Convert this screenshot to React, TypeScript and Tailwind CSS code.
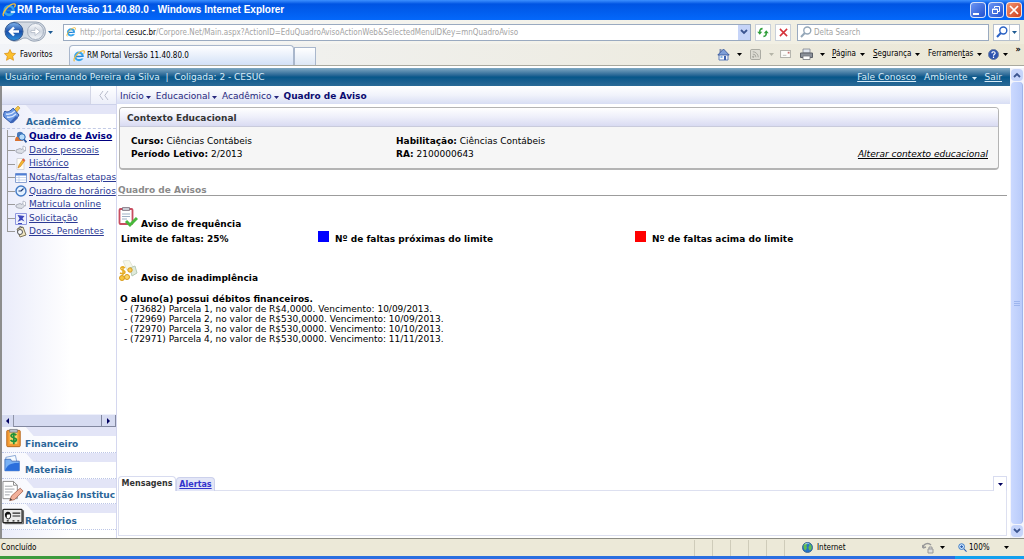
import type { ReactNode } from "react";

const verdana = "font-['DejaVu_Sans',Verdana,sans-serif]";
const tahoma = "font-['DejaVu_Sans_Condensed',Tahoma,'Noto_Sans',sans-serif]";

function Caret({ className = "" }: { className?: string }) {
  return (
    <svg viewBox="0 0 5 3" className={`w-[5px] h-[3px] shrink-0 ${className}`} fill="currentColor">
      <path d="M0 0h5L2.5 3z" />
    </svg>
  );
}

function Chevron({ up = false }: { up?: boolean }) {
  return (
    <svg viewBox="0 0 8 6" className="w-2 h-1.5" fill="none" stroke="#3c5590" strokeWidth="1.8">
      <path d={up ? "M1 5l3-3 3 3" : "M1 1l3 3 3-3"} />
    </svg>
  );
}

function IeLogo({ className = "w-3 h-3" }: { className?: string }) {
  return (
    <svg viewBox="0 0 16 16" className={`shrink-0 ${className}`} fill="none">
      <circle cx="8" cy="8.5" r="5" stroke="#36a4ec" strokeWidth="3" />
      <path d="M4 8.6h9" stroke="#2282d6" strokeWidth="2" />
      <path d="M10 10.3h5" stroke="#eaf4ff" strokeWidth="2" />
      <path d="M2 15C-1 12 8 1 14 1c2 0 1 3 0 4" stroke="#f3be3c" strokeWidth="1.5" />
    </svg>
  );
}

/* ── Browser icons ── */

function BackForward() {
  return (
    <svg viewBox="0 0 42 22" className="w-[42px] h-[22px]" fill="none">
      <defs>
        <linearGradient id="back" x2="0" y2="1">
          <stop stopColor="#7fb4ee" />
          <stop offset=".5" stopColor="#1b4fa8" />
          <stop offset="1" stopColor="#2e93e0" />
        </linearGradient>
        <linearGradient id="fwd" x2="0" y2="1">
          <stop stopColor="#fafbfd" />
          <stop offset=".5" stopColor="#cfd6e0" />
          <stop offset="1" stopColor="#f6f8fb" />
        </linearGradient>
      </defs>
      <path d="M10 1h22a9.500 9.500 0 010 19c-6 1-7-3-11-3s-6 4-12 3A10 10 0 0110 1z" fill="#d3dae3" stroke="#97a3b4" />
      <circle cx="10" cy="10.500" r="9" fill="url(#back)" stroke="#345a91" />
      <circle cx="31.500" cy="10.500" r="8" fill="url(#fwd)" stroke="#a4afbf" />
      <path d="M15 10.500H6m4-4l-4 4 4 4" stroke="#fff" strokeWidth="2.400" />
      <path d="M27 9.500h4v-3l5 4-5 4v-3h-4z" fill="#fff" stroke="#b3bac6" strokeWidth=".8" />
    </svg>
  );
}

function Refresh() {
  return (
    <svg viewBox="0 0 14 12" className="w-3 h-[11px]" fill="none" stroke="#2f9e3a" strokeWidth="1.800">
      <path d="M6.500 1.500C4 1.500 3 3 3.300 6" />
      <path d="M.3 5h5.800L3.200 8.500z" fill="#2f9e3a" stroke="none" />
      <path d="M7.500 10.500c2.500 0 3.500-1.500 3.200-4.500" />
      <path d="M7.900 7h5.800l-2.900-3.500z" fill="#2f9e3a" stroke="none" />
    </svg>
  );
}

function Stop() {
  return (
    <svg viewBox="0 0 10 10" className="w-[9px] h-[9px]" stroke="#d6323a" strokeWidth="1.700">
      <path d="M1 1l8 8M9 1L1 9" />
    </svg>
  );
}

function Magnifier({ color }: { color: string }) {
  return (
    <svg viewBox="0 0 12 12" className="w-3 h-3 shrink-0" fill="none" stroke={color}>
      <circle cx="7.300" cy="4.500" r="3.500" strokeWidth="1.400" />
      <path d="M4.800 7L1 11" strokeWidth="2" />
    </svg>
  );
}

function Star() {
  return (
    <svg viewBox="0 0 12 12" className="w-3 h-3 shrink-0">
      <path d="M6 .5l1.700 3.600 3.900.5-2.900 2.700.8 4L6 9.300l-3.500 2 .8-4L.4 4.600l3.900-.5z" fill="#fbc02d" stroke="#d98c12" strokeWidth=".7" />
    </svg>
  );
}

function House() {
  return (
    <svg viewBox="0 0 13 13" className="w-[13px] h-[13px]">
      <path d="M2.500 1h2v4h-2z" fill="#7b8bb0" />
      <path d="M2 6.500h9V12H2z" fill="#f4f6fc" stroke="#5f7fb8" />
      <path d="M6.500 1L.8 7h11.400z" fill="#7f9fd8" stroke="#2f4f95" strokeWidth=".8" />
      <path d="M7 8h2v4H7z" fill="#3d61ad" />
      <path d="M3.500 8h2v2h-2z" fill="#82b5e8" />
    </svg>
  );
}

function Feed() {
  return (
    <svg viewBox="0 0 12 12" className="w-[11px] h-[11px]" fill="none" stroke="#a3a39b">
      <rect x=".5" y=".5" width="11" height="11" rx="1.500" fill="#dddcd3" />
      <path d="M3 5.500A3.500 3.500 0 016.500 9M3 3a6 6 0 016 6" />
      <circle cx="3.500" cy="8.500" r=".7" fill="#a3a39b" />
    </svg>
  );
}

function Envelope() {
  return (
    <svg viewBox="0 0 12 9" className="w-[11px] h-2" fill="none">
      <rect x=".5" y=".5" width="11" height="8" fill="#fcfcfa" stroke="#aaaaa4" />
      <path d="M3 6h4" stroke="#bcbcb6" />
      <path d="M8.500 2h2v2h-2z" fill="#c76f6f" />
    </svg>
  );
}

function Printer() {
  return (
    <svg viewBox="0 0 13 12" className="w-[13px] h-3">
      <path d="M3 1h7v4H3z" fill="#dfe5ee" stroke="#84888f" strokeWidth=".8" />
      <path d="M.5 5h12v4.500H.5z" fill="#8a9099" stroke="#5c6068" />
      <path d="M3 8h7v3.500H3z" fill="#fff" stroke="#73777e" strokeWidth=".8" />
    </svg>
  );
}

function Globe() {
  return (
    <svg viewBox="0 0 12 12" className="w-[11px] h-[11px]">
      <circle cx="6" cy="6" r="5.500" fill="#2672c8" stroke="#274f86" strokeWidth=".8" />
      <path d="M2 3c2-2 4-2 4-1S4 4 5 5s0 3-1 4-3-3-2-6zM8 2c2 1 3 3 2.500 5S8 10 7.500 8s-1-2 0-3 .5-2 .5-3z" fill="#62bd50" />
      <path d="M3 2.500C5 1 7 1.500 8 2" stroke="#c8e6ff" strokeWidth=".8" fill="none" />
    </svg>
  );
}

/* ── Sidebar icons ── */

function PlugIcon() {
  return (
    <svg viewBox="0 0 20 20" className="w-5 h-5">
      <path d="M11 6l5-5 2 2-4 5z" fill="#f3c64a" stroke="#b98d20" strokeWidth=".6" />
      <path d="M3 6c2 3 8-2 8-3l6 7c-2 4-5 6-8 8l-7-6c-1-2 0-5 1-6z" fill="#6c9ae6" stroke="#2f55a4" />
      <path d="M4 9c4 1 7-1 9-3M5 12c4 1 7-1 9-3" stroke="#d6e6ff" strokeWidth="1.300" fill="none" />
      <path d="M8 17l6-6 2 2-5 5z" fill="#3b64b8" />
    </svg>
  );
}

const menuIcons: Record<string, ReactNode> = {
  search: (
    <>
      <path d="M0 10c0-4 2-5 4-5s4 1 4 5z" fill="#d9702f" />
      <path d="M2 3c0-3 6-3 6 0v3H2z" fill="#4a78b8" />
      <circle cx="7" cy="6" r="3.200" fill="#b8ddfb" stroke="#2668b6" />
      <path d="M9 8.500l2.500 2.800" stroke="#24519c" strokeWidth="1.800" />
    </>
  ),
  hand: (
    <>
      <path d="M1 6l4-1.500 2 1 2-2 1 3-3 3-4-.5-2-1z" fill="#dcdfe6" stroke="#9296a3" strokeWidth=".7" />
      <path d="M8 2l2.500 1v4L8 5.500z" fill="#fff" stroke="#999eb0" strokeWidth=".6" />
    </>
  ),
  pencil: (
    <>
      <path d="M2 .5h7v11H2z" fill="#fffdf4" stroke="#c5c8d3" strokeWidth=".7" />
      <path d="M3 10l1-3 4-6 2 1.500-4.500 6z" fill="#f5ba2e" stroke="#c4741b" strokeWidth=".6" />
      <path d="M7 2l2 1.500L10 2 8.500.5z" fill="#df5a4d" />
    </>
  ),
  table: (
    <>
      <path d="M.5 1.500h11v9H.5z" fill="#fff" stroke="#8aa2d2" />
      <path d="M.5 1.500h11v2H.5z" fill="#4f7fd6" />
      <path d="M4 3v7M1 5.500h10M1 8h10" stroke="#b6c7e8" strokeWidth=".7" />
    </>
  ),
  clock: (
    <>
      <circle cx="6" cy="6" r="5" fill="#e4f1ff" stroke="#4179c5" strokeWidth="1.400" />
      <path d="M6 6l2.500-2.500M6 6H3.500" stroke="#1c3a75" strokeWidth="1.200" />
    </>
  ),
  form: (
    <>
      <path d="M.5.5h11v11H.5z" fill="#eef0fc" stroke="#8e97df" />
      <path d="M2.500 2l7 1-2 2.500 2 3-3-1.500-4 2 2-3.500z" fill="#3d47bd" />
      <path d="M3 10.500h4" stroke="#3d47bd" fill="none" />
    </>
  ),
  docs: (
    <>
      <path d="M2 3l6-2 3 8-6 2z" fill="#f0e5bd" stroke="#7e765b" />
      <circle cx="5" cy="6" r="2.500" fill="#fafafa" stroke="#55565c" />
      <path d="M4 2c0-2 3-2 3 0" stroke="#4f4f55" fill="none" />
    </>
  ),
};

const menuItems = [
  { label: "Quadro de Aviso", icon: "search", active: true },
  { label: "Dados pessoais", icon: "hand" },
  { label: "Histórico", icon: "pencil" },
  { label: "Notas/faltas etapas", icon: "table" },
  { label: "Quadro de horários", icon: "clock" },
  { label: "Matricula online", icon: "hand" },
  { label: "Solicitação", icon: "form" },
  { label: "Docs. Pendentes", icon: "docs" },
];

const modules = [
  {
    label: "Financeiro",
    icon: (
      <>
        <rect x="5" y="2" width="14" height="17" rx="1" fill="#f39a33" stroke="#b5651b" />
        <path d="M8 4h8v12H8z" fill="#f9d66b" />
        <path d="M8 1h8v3H8z" fill="#b9bec8" stroke="#6c7079" strokeWidth=".7" />
        <path d="M15 7c-2-2-6-1-5.500 1s6 1.500 5.500 4-5 2-6 0M12.300 4.500v12" stroke="#20913a" strokeWidth="1.800" fill="none" />
      </>
    ),
  },
  {
    label: "Materiais",
    icon: (
      <>
        <path d="M4 3l10-2 2 9H4z" fill="#f5faff" stroke="#6e93cb" strokeWidth=".8" />
        <path d="M3 5h6l1 2h8v10H3z" fill="#79b1f4" stroke="#3565b3" strokeWidth=".8" />
        <path d="M3 17c3-8 9-8 15-8v8z" fill="#2b6fdc" />
      </>
    ),
  },
  {
    label: "Avaliação Instituc",
    icon: (
      <>
        <path d="M1 1h11l4 4v14H1z" fill="#fff" stroke="#8b8b8b" />
        <path d="M12 1v4h4" stroke="#8b8b8b" />
        <path d="M3 6h8M3 9h10M3 12h8M3 15h5" stroke="#9fa3a8" />
        <path d="M8 21l2-5 9-8 3 3-9 9z" fill="#f2b09a" stroke="#a05d47" strokeWidth=".8" />
        <path d="M8 21l1-2.500 1.500 1.500z" fill="#333" />
      </>
    ),
  },
  {
    label: "Relatórios",
    icon: (
      <>
        <rect x="1" y="3" width="20" height="14" rx="1" fill="#e9e9e9" stroke="#222" strokeWidth="1.400" />
        <path d="M22.500 4v14H3" stroke="#555" fill="none" />
        <path d="M4 8c1-3 5-2 5 1s-1 4-2.500 4S3 11 4 8z" fill="#fff" stroke="#111" />
        <path d="M3 9c0-4 5-5 6-1-2 1-3 0-4 1v3z" fill="#111" />
        <path d="M11 7h8M11 10h8M5 15h2M11 15h2M16 15h2" stroke="#222" strokeWidth="1.200" />
      </>
    ),
  },
];

const parcels = [
  { id: "73682", n: 1, value: "R$4,0000", due: "10/09/2013" },
  { id: "72969", n: 2, value: "R$530,0000", due: "10/09/2013" },
  { id: "72970", n: 3, value: "R$530,0000", due: "10/10/2013" },
  { id: "72971", n: 4, value: "R$530,0000", due: "11/11/2013" },
];

/* Lavender strip with a slanted left edge, behind each module title */
function ModuleTab() {
  return (
    <svg viewBox="0 0 115 10" preserveAspectRatio="none" className="absolute top-0 left-0 w-full h-2.5">
      <path d="M24 0h91v9H32z" fill="#e3e5f7" />
    </svg>
  );
}

function TitleBar() {
  return (
    <header className="h-5 shrink-0 flex items-center gap-px pl-0.5 pr-0.5 bg-linear-to-b from-[#3c90ff] via-[#0054e3] via-20% to-[#0468fb]">
      <IeLogo className="w-3.5 h-3.5" />
      <h1 className="flex-1 text-white font-bold text-[10px] leading-4 whitespace-nowrap font-['Liberation_Sans',sans-serif]">
        RM Portal Versão 11.40.80.0 - Windows Internet Explorer
      </h1>
      <div className="flex gap-0.5">
        <button aria-label="Minimizar" className="w-4 h-4 rounded-sm border border-white/80 bg-linear-to-br from-[#6b94f3] to-[#2350cf] flex items-end p-0.5">
          <span className="w-1.5 h-0.5 bg-white" />
        </button>
        <button aria-label="Restaurar" className="w-4 h-4 rounded-sm border border-white/80 bg-linear-to-br from-[#6b94f3] to-[#2350cf] flex items-center justify-center">
          <svg viewBox="0 0 10 10" className="w-2.5 h-2.5" fill="none" stroke="#fff">
            <path d="M3.500 3V1.500h5v5H7M1.500 4h5v4.500h-5zM1.500 4.500h5" />
          </svg>
        </button>
        <button aria-label="Fechar" className="w-4 h-4 rounded-sm border border-white/80 bg-linear-to-br from-[#f0936f] to-[#cf3b14] flex items-center justify-center">
          <svg viewBox="0 0 10 10" className="w-2.5 h-2.5" stroke="#fff" strokeWidth="1.700">
            <path d="M1 1l8 8M9 1L1 9" />
          </svg>
        </button>
      </div>
    </header>
  );
}

function AddressBar() {
  return (
    <div className="h-6 shrink-0 flex items-center pl-1 pr-1 bg-linear-to-r from-[#f7f8fa] to-[#efecdc]">
      <button aria-label="Voltar e avançar" className="shrink-0">
        <BackForward />
      </button>
      <button aria-label="Páginas recentes" className="px-0.5 text-[#1e5a92]">
        <Caret />
      </button>
      <div className="ml-2 flex-1 h-[17px] flex items-center border border-[#9aaac0] bg-white">
        <span className="w-4 pl-0.5">
          <IeLogo className="w-2.5 h-2.5" />
        </span>
        <div className="relative flex-1 h-full">
          <span aria-hidden="true" className="block text-[8px] leading-4 text-[#a3a3a3] whitespace-nowrap">
            http://portal.<b className="font-normal text-black">cesuc.br</b>
            /Corpore.Net/Main.aspx?ActionID=EduQuadroAvisoActionWeb&amp;SelectedMenuIDKey=mnQuadroAviso
          </span>
          <input aria-label="Endereço" className="absolute inset-0 w-full bg-white text-[8px] opacity-0 focus:opacity-100" />
        </div>
        <button aria-label="Mostrar endereços" className="w-3 h-[15px] bg-[#c6d4f8] flex items-center justify-center">
          <Chevron />
        </button>
      </div>
      <button aria-label="Atualizar" className="ml-1 w-4 h-[17px] border border-[#c9d0d9] bg-white flex items-center justify-center">
        <Refresh />
      </button>
      <button aria-label="Parar" className="ml-1 w-4 h-[17px] border border-[#c9d0d9] bg-white flex items-center justify-center">
        <Stop />
      </button>
      <label className="ml-1.5 w-48 h-[17px] pl-0.5 flex items-center gap-0.5 border border-[#9aaac0] bg-white">
        <Magnifier color="#94a7b8" />
        <input aria-label="Pesquisar" placeholder="Delta Search" className="min-w-0 flex-1 text-[8px] leading-[15px] outline-none placeholder:text-[#a3a3a3]" />
      </label>
      <div className="ml-1 flex h-[17px] border border-[#b5bfcc] bg-white">
        <button aria-label="Buscar" className="w-[15px] flex items-center justify-center">
          <Magnifier color="#2b62c4" />
        </button>
        <button aria-label="Opções de busca" className="w-2.5 flex items-center justify-center border-l border-[#c5cedb] text-[#1e5a92]">
          <Caret />
        </button>
      </div>
    </div>
  );
}

function CommandBar() {
  return (
    <div className="h-[22px] shrink-0 flex items-end pl-1 text-[8px] text-black bg-linear-to-r from-[#f2f4f8] to-[#ebe7d5] border-b border-[#a9a99f]">
      <button className="h-5 w-[65px] flex items-center gap-1">
        <Star />
        Favoritos
      </button>
      <button className="h-5 w-[225px] pl-[3px] flex items-center gap-0.5 border border-b-0 border-[#a9b7cc] rounded-t-sm bg-linear-to-b from-white to-[#d3e1f7]">
        <IeLogo />
        RM Portal Versão 11.40.80.0
      </button>
      <button aria-label="Nova guia" className="h-[18px] w-[22px] border border-b-0 border-[#a9b7cc] bg-linear-to-b from-white to-[#dde7f5]" />
      <nav className="ml-auto h-[22px] pr-0.5 flex items-center">
        <button aria-label="Página inicial" className="w-[33px] flex items-center gap-[7px]">
          <House />
          <Caret />
        </button>
        <button aria-label="Feeds" className="w-[30px] flex items-center gap-2 text-[#b5b5a8]">
          <Feed />
          <Caret />
        </button>
        <button aria-label="Ler email" className="w-5">
          <Envelope />
        </button>
        <button aria-label="Imprimir" className="w-8 flex items-center gap-[7px]">
          <Printer />
          <Caret />
        </button>
        <button className="w-[41px] flex items-center gap-1"><span><u>P</u>ágina</span><Caret /></button>
        <button className="w-[55px] flex items-center gap-1"><span><u>S</u>egurança</span><Caret /></button>
        <button className="w-[60px] flex items-center gap-1"><span>Ferramen<u>t</u>as</span><Caret /></button>
        <button aria-label="Ajuda" className="w-[26px] flex items-center gap-1">
          <svg viewBox="0 0 12 12" className="w-[11px] h-[11px]" fill="none">
            <circle cx="6" cy="6" r="5.500" fill="#2f55b0" stroke="#6d7f9f" />
            <path d="M4.300 4.500c0-2 3.500-2 3.500 0 0 1.300-1.800 1.200-1.800 2.800M6 8.300v1.400" stroke="#fff" strokeWidth="1.300" />
          </svg>
          <Caret />
        </button>
        <button aria-label="Mais" className="self-start w-2 text-[9px] leading-3 font-bold">»</button>
      </nav>
    </div>
  );
}

function Sidebar() {
  return (
    <aside className="w-[117px] shrink-0 flex flex-col overflow-hidden border-l-2 border-r border-l-[#8d8d8d] border-r-[#d4d7ef] bg-linear-to-r from-[#eaecfa] via-white via-60% to-white">
      <div className="h-[19px] shrink-0 flex justify-end border-b border-[#cdd2ea] bg-linear-to-b from-white to-[#d8ddf3]">
        <button aria-label="Recolher menu" className="w-[26px] flex items-center justify-center border-l border-[#d3d6e6] bg-white/50">
          <svg viewBox="0 0 10 9" className="w-2.5 h-[9px]" fill="none" stroke="#b9bdcc">
            <path d="M4 0L.8 4.500 4 9M9 0L5.800 4.500 9 9" />
          </svg>
        </button>
      </div>
      <h2 className="relative h-6 shrink-0 flex items-end border-b border-dashed border-[#c3cbe6]">
        <ModuleTab />
        <span className="relative w-6 self-start"><PlugIcon /></span>
        <a href="#academico" className="relative text-[9px] leading-3 font-bold text-[#2b6699]">Acadêmico</a>
      </h2>
      <ul className="mt-px ml-[5px] h-[109px] shrink-0 flex flex-col text-[9px]">
        {menuItems.map((item, i) => (
          <li key={item.label} className="flex-1 flex items-center whitespace-nowrap">
            <span className={`w-2 shrink-0 flex flex-col border-[#9a9a9a] ${i === menuItems.length - 1 ? "self-start h-[7px] border-l border-b" : "self-stretch border-l justify-center"}`}>
              {i < menuItems.length - 1 && <span className="h-px bg-[#9a9a9a]" />}
            </span>
            <svg viewBox="0 0 12 12" className="w-3 h-3 mr-0.5 shrink-0" fill="none">
              {menuIcons[item.icon]}
            </svg>
            <a href="#item" className={`underline ${item.active ? "font-bold text-[#000080]" : "text-[#2c3a94]"}`}>
              {item.label}
            </a>
          </li>
        ))}
      </ul>
      <div className="flex-1" />
      <div className="h-[13px] shrink-0 flex bg-[#d6dbf1] border-t border-[#eef0fb] text-[#000060]">
        <button aria-label="Rolar à esquerda" className="w-3 flex items-center justify-center border-r border-[#8f94a8]">
          <svg viewBox="0 0 3 6" className="w-[3px] h-1.5" fill="currentColor"><path d="M3 0v6L0 3z" /></svg>
        </button>
        <div className="flex-1 border-r border-b border-[#8288a0]" />
        <button aria-label="Rolar à direita" className="w-3.5 flex items-center justify-center border-r border-b border-[#8288a0]">
          <svg viewBox="0 0 3 6" className="w-[3px] h-1.5" fill="currentColor"><path d="M0 0v6l3-3z" /></svg>
        </button>
      </div>
      <nav className="h-[103px] mb-2 shrink-0 flex flex-col">
        {modules.map((mod) => (
          <a key={mod.label} href="#modulo" className="relative flex-1 flex items-end border-b border-dotted border-[#bcc6e6] bg-white/60 text-[9px] leading-[15px] font-bold text-[#2b6699] whitespace-nowrap">
            <ModuleTab />
            <svg viewBox="0 0 24 22" className="relative self-center w-[23px] h-[22px] shrink-0" fill="none">
              {mod.icon}
            </svg>
            <span className="relative">{mod.label}</span>
          </a>
        ))}
      </nav>
    </aside>
  );
}

function Notice({ icon, title, children }: { icon: ReactNode; title: string; children: ReactNode }) {
  return (
    <section>
      <h3 className="flex items-end gap-[3px] h-6 text-[9px] leading-[11px] font-bold">
        {icon}
        {title}
      </h3>
      {children}
    </section>
  );
}

function Content() {
  return (
    <main className="flex-1 min-w-0 flex flex-col bg-white">
      <nav className="h-[18px] shrink-0 pt-1 pl-[3px] flex items-center gap-[5px] text-[9px] text-[#26267c] bg-linear-to-b from-white via-[#f1f3fb] via-50% to-[#d8def4]">
        {["Início", "Educacional", "Acadêmico"].map((label) => (
          <button key={label} className="flex items-center gap-0.5">
            {label}
            <Caret />
          </button>
        ))}
        <b className="text-[#0b0b70]">Quadro de Aviso</b>
      </nav>

      <section className="mt-[3px] ml-0.5 mr-[11px] h-[63px] shrink-0 border border-b-2 border-[#b4b4b4] rounded-sm bg-[#f6f6f6] overflow-hidden">
        <h2 className="h-[19px] pl-[7px] text-[9px] leading-5 font-bold text-[#333] border-b border-[#c9cbdc] bg-linear-to-b from-white via-[#eeeffa] via-50% to-[#d9dbf2]">
          Contexto Educacional
        </h2>
        <div className="pt-2 pl-[11px] pr-2.5 grid grid-cols-[30fr_30fr_37fr] items-end text-[9px] leading-[13px]">
          <p><b>Curso:</b> Ciências Contábeis<br /><b>Período Letivo:</b> 2/2013</p>
          <p><b>Habilitação:</b> Ciências Contábeis<br /><b>RA:</b> 2100000643</p>
          <a href="#contexto" className="justify-self-end italic underline">Alterar contexto educacional</a>
        </div>
      </section>

      <div className="ml-px mr-[3px]">
        <h2 className="mt-3 h-3.5 text-[9px] leading-4 font-bold text-[#8a8a8a] border-b border-[#9c9c9c]">Quadro de Avisos</h2>
        <div className="pt-2.5 flex flex-col gap-[13px]">
          <Notice
            title="Aviso de frequência"
            icon={
              <svg viewBox="0 0 20 22" className="self-start w-5 h-[22px]" fill="none">
                <rect x="1.500" y="3" width="13" height="15" rx="1" fill="#fff" stroke="#c84e61" strokeWidth="1.800" />
                <path d="M4.500 1.500h7v3h-7z" fill="#c9ccd3" stroke="#7d7480" strokeWidth=".8" />
                <path d="M4 8h8M4 10.500h8M4 13h5" stroke="#9db0c5" />
                <path d="M8 15l4 4 7-7" stroke="#46b83c" strokeWidth="3" />
              </svg>
            }
          >
            <div className="pt-px grid grid-cols-[200fr_317fr_372fr] text-[9px] leading-4 font-bold">
              <p className="pl-[3px]">Limite de faltas: 25%</p>
              <p className="flex gap-1.5"><span className="w-[11px] h-[11px] bg-[#0000ff]" />Nº de faltas próximas do limite</p>
              <p className="flex gap-1.5"><span className="w-[11px] h-[11px] bg-[#ff0000]" />Nº de faltas acima do limite</p>
            </div>
          </Notice>
          <Notice
            title="Aviso de inadimplência"
            icon={
              <svg viewBox="0 0 20 22" className="self-start w-5 h-[22px]" fill="none">
                <path d="M5 1l6-1 4 7-6 3z" fill="#f6f7e9" stroke="#e3e6d8" />
                <path d="M12 8l5-2 2 7-5 3z" fill="#dfeadb" stroke="#b7cab5" />
                <path d="M7 8c-2-2-5-1-4 1s4 1 4 3-3 2-5 1M5 6v9" stroke="#e6ad22" strokeWidth="1.500" />
                <circle cx="12" cy="10" r="2.200" fill="#f8cf55" stroke="#d79a1b" />
                <circle cx="4" cy="18" r="2.500" fill="#f8c63e" stroke="#d79a1b" />
                <circle cx="9" cy="17" r="2.500" fill="#fad76b" stroke="#d79a1b" />
              </svg>
            }
          >
            <div className="mt-2.5 pl-0.5 text-[9px] leading-[10px]">
              <p className="font-bold">O aluno(a) possui débitos financeiros.</p>
              <ul className="pl-1">
                {parcels.map((p) => (
                  <li key={p.id}>
                    - ({p.id}) Parcela {p.n}, no valor de {p.value}. Vencimento: {p.due}.
                  </li>
                ))}
              </ul>
            </div>
          </Notice>
        </div>
      </div>

      <div className="mt-auto ml-px mr-[3px] mb-0.5">
        <div role="tablist" className="h-[15px] flex items-end text-[8px]">
          <button role="tab" aria-selected="true" className="h-[15px] w-[58px] border border-b-0 border-[#d8dcf0] rounded-t-sm font-bold text-[#333] whitespace-nowrap">Mensagens</button>
          <button role="tab" aria-selected="false" className="h-[14px] w-[39px] border border-b-0 border-[#ccd1ec] rounded-t-sm bg-[#e3e6f7] font-bold text-[#3333cc] underline">Alertas</button>
          <span className="self-stretch flex-1 border-b border-[#dde0f0]" />
          <button aria-label="Recolher painel" className="h-[15px] w-3.5 flex items-center justify-center border border-b-0 border-[#d8dcf0] text-[#000060]">
            <Caret />
          </button>
        </div>
        <div className="h-[45px] border border-t-0 border-[#dde0f0]" />
      </div>
    </main>
  );
}

function StatusBar() {
  return (
    <footer className="h-[18px] shrink-0 flex items-center pl-px pr-1 text-[8px] text-black bg-[#ece9d8] border-t border-[#8d8d84]">
      <span className="flex-1">Concluído</span>
      <div className="flex">
        {[0, 1, 2, 3, 4, 5].map((i) => (
          <span key={i} className="w-[18px] h-4 border-l border-[#cfccba]" />
        ))}
      </div>
      <span className="w-[120px] flex items-center gap-1"><Globe />Internet</span>
      <button aria-label="Proteção" className="w-9 flex items-center gap-1.5">
        <svg viewBox="0 0 12 12" className="w-3 h-3" fill="none" stroke="#999">
          <path d="M1 6c0-4 5-6 8-3M1 6l3-1M1 6L0 3" strokeWidth="1.400" />
          <path d="M6 7h5v4H6zM7 7V5h3v2" fill="#ddd" />
        </svg>
        <Caret />
      </button>
      <button className="w-[62px] flex items-center gap-0.5">
        <svg viewBox="0 0 10 10" className="w-[9px] h-[9px]" fill="none">
          <circle cx="4" cy="4" r="3.200" fill="#d3e9ff" stroke="#2c6fc1" />
          <path d="M2.500 4h3M4 2.500v3M6.500 6.500l3 3" stroke="#2c5fb1" strokeWidth="1.200" />
        </svg>
        100%
        <Caret className="ml-3" />
      </button>
    </footer>
  );
}

export default function App() {
  return (
    <div className={`h-screen min-h-[500px] flex flex-col overflow-hidden bg-white ${tahoma}`}>
      <TitleBar />
      <AddressBar />
      <CommandBar />
      <div className="flex-1 min-h-0 mt-0.5 flex">
        <div className={`flex-1 min-w-0 flex flex-col text-black ${verdana}`}>
          <div className="h-[18px] shrink-0 pt-0.5 flex items-center pl-[5px] pr-2 text-[9px] text-[#d9ecf8] bg-linear-to-b from-[#7fa9c3] via-[#05578a] via-50% to-[#2a6a97]">
            <span className="flex-1">Usuário: Fernando Pereira da Silva &nbsp;|&nbsp; Coligada: 2 - CESUC</span>
            <div className="flex items-center gap-2">
              <a href="#fale" className="underline">Fale Conosco</a>
              <button className="flex items-center gap-1">Ambiente<Caret /></button>
              <a href="#sair" className="underline">Sair</a>
            </div>
          </div>
          <div className="flex-1 min-h-0 flex">
            <Sidebar />
            <Content />
          </div>
        </div>
        <div className="w-3.5 shrink-0 flex flex-col p-px bg-[#f3f4fb]">
          <button aria-label="Rolar para cima" className="h-3 rounded-sm bg-[#c6d4fa] flex items-center justify-center"><Chevron up /></button>
          <div className="flex-1 my-px rounded-sm border-r border-[#9fb4ea] bg-linear-to-r from-[#cbd9ff] to-[#b9cbfa] flex flex-col items-center justify-center gap-px">
            <span className="w-1.5 h-px bg-[#9db5ee]" />
            <span className="w-1.5 h-px bg-[#9db5ee]" />
            <span className="w-1.5 h-px bg-[#9db5ee]" />
          </div>
          <button aria-label="Rolar para baixo" className="h-3 rounded-sm bg-[#c6d4fa] flex items-center justify-center"><Chevron /></button>
        </div>
      </div>
      <StatusBar />
      <div className="h-[3px] shrink-0 flex bg-[#2a6ee0]">
        <span className="w-20 bg-[#3c9a3c]" />
        <span className="ml-auto w-[69px] bg-[#12a0ee]" />
      </div>
    </div>
  );
}
